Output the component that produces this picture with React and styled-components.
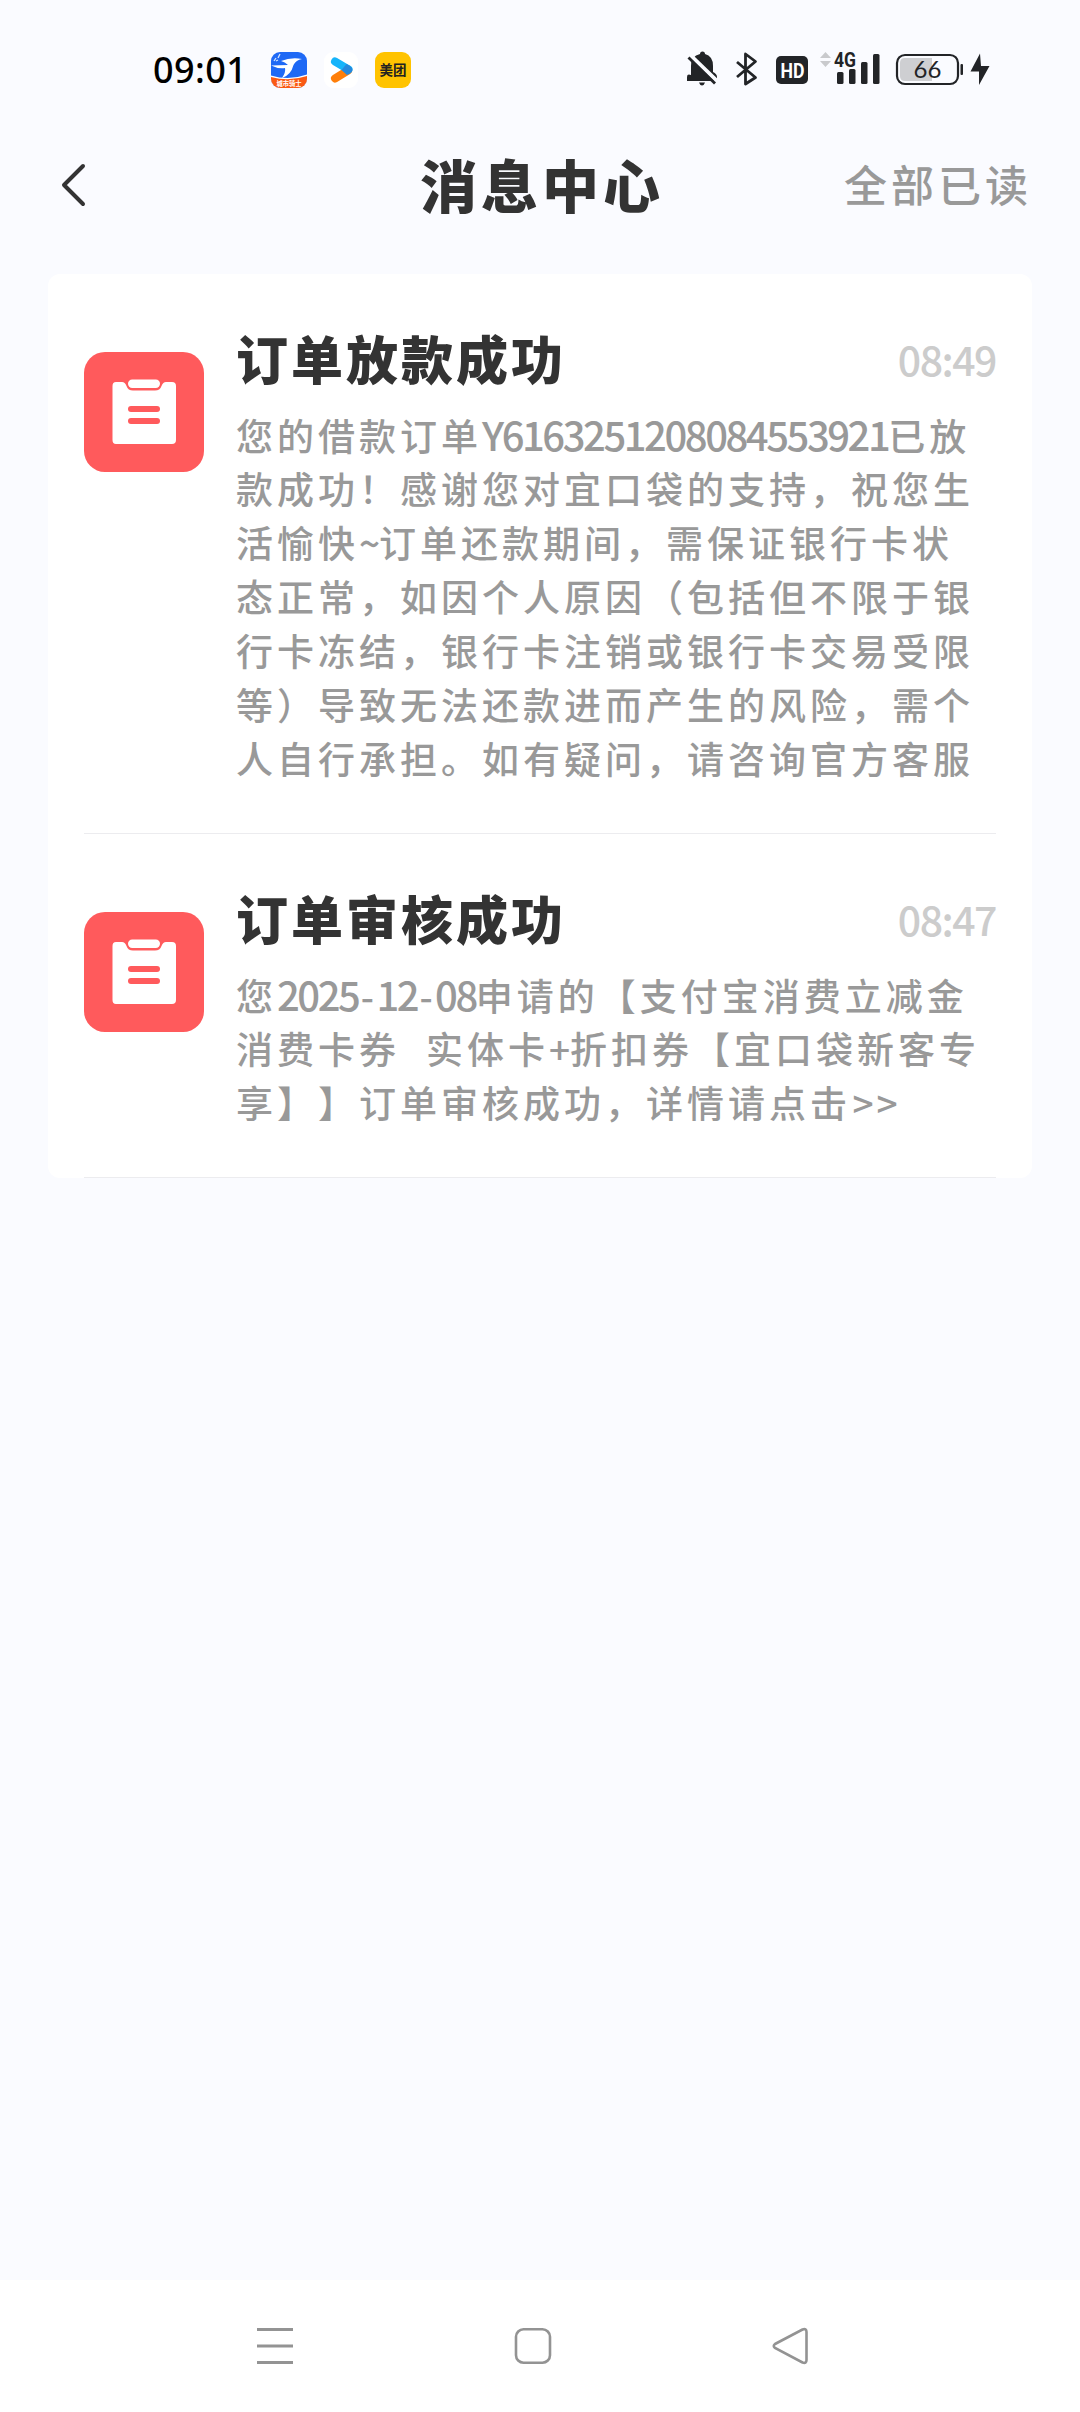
import styled, { createGlobalStyle } from "styled-components";

const GlobalStyle = createGlobalStyle`
  * {
    box-sizing: border-box;
  }

  body {
    margin: 0;
    background: #fafbff;
    font-family: "Noto Sans CJK SC", sans-serif;
    text-spacing-trim: space-all;
  }
`;

const Screen = styled.div`
  width: 1080px;
  height: 2412px;
  display: flex;
  flex-direction: column;
  background: #fafbff;
  overflow: hidden;
`;

const StatusBar = styled.div`
  height: 140px;
  padding: 0 90px 0 153px;
  display: flex;
  align-items: center;
  justify-content: space-between;
`;

const StatusGroup = styled.div`
  display: flex;
  align-items: center;

  svg {
    display: block;
  }
`;

const Clock = styled.span`
  width: 118px;
  font-family: "Noto Sans", sans-serif;
  font-size: 36px;
  font-weight: 500;
  line-height: 44px;
  letter-spacing: 0.4px;
  color: #000;
`;

const AppIcons = styled.div`
  display: flex;
  align-items: center;
  gap: 16px;
`;

const Header = styled.header`
  height: 134px;
  padding: 0 48px 49px 60px;
  display: grid;
  grid-template-columns: 200px 1fr 188px;
  align-items: center;
`;

const BackButton = styled.button`
  display: flex;
  padding: 5px 0 0;
  border: none;
  background: none;
`;

const PageTitle = styled.h1`
  margin: 0;
  padding-right: 20px;
  font-size: 57px;
  font-weight: 900;
  line-height: 80px;
  letter-spacing: 4px;
  text-align: center;
  color: #333;
`;

const ReadAll = styled.button`
  padding: 0;
  border: none;
  background: none;
  font-family: inherit;
  font-size: 43px;
  font-weight: 500;
  line-height: 60px;
  letter-spacing: 4px;
  white-space: nowrap;
  color: #999;
`;

const Card = styled.main`
  margin: 0 48px;
  padding: 0 36px;
  border-radius: 12px;
  background: #fff;
`;

const Message = styled.article`
  display: flex;
  align-items: flex-start;
  gap: 32px;
  padding: 46px 0 47px;
  border-bottom: 1px solid #ececef;
`;

const MessageIcon = styled.div`
  flex: none;
  width: 120px;
  height: 120px;
  margin-top: 32px;
  border-radius: 21px;
  background: #ff5a5c;
`;

const Content = styled.div`
  flex: 1;
  min-width: 0;
`;

const TitleRow = styled.div`
  height: 78px;
  padding-bottom: 3px;
  display: flex;
  align-items: center;
  justify-content: space-between;
`;

const MessageTitle = styled.h2`
  margin: 0;
  font-size: 52px;
  font-weight: 900;
  line-height: 72px;
  letter-spacing: 3px;
  color: #333;
`;

const Time = styled.time`
  font-size: 41px;
  font-weight: 500;
  line-height: 60px;
  letter-spacing: -1.5px;
  color: #ccc;
`;

const Body = styled.div`
  margin-top: 10px;
  color: #999;
`;

const Line = styled.p`
  height: 54px;
  margin: 0;
  font-size: 37px;
  font-weight: 500;
  line-height: 52px;
  letter-spacing: 4px;
  white-space: pre;
`;

const Digits = styled.span`
  font-size: 40px;
  letter-spacing: -2.45px;
`;

const Mark = styled.span`
  display: inline-block;
  width: ${(props) => props.$width}px;
  letter-spacing: 0;
  text-align: center;
`;

const NavBar = styled.nav`
  height: 132px;
  margin-top: auto;
  padding: 0 271px 0 256px;
  display: flex;
  align-items: center;
  justify-content: space-between;
  background: #fff;
`;

const markWidths = { "-": 18, "~": 20, "+": 21, ">": 24, " ": 13 };

const messages = [
  {
    id: 1,
    title: "订单放款成功",
    time: "08:49",
    lines: [
      "您的借款订单Y6163251208084553921已放",
      "款成功！感谢您对宜口袋的支持，祝您生",
      "活愉快~订单还款期间，需保证银行卡状",
      "态正常，如因个人原因（包括但不限于银",
      "行卡冻结，银行卡注销或银行卡交易受限",
      "等）导致无法还款进而产生的风险，需个",
      "人自行承担。如有疑问，请咨询官方客服",
    ],
  },
  {
    id: 2,
    title: "订单审核成功",
    time: "08:47",
    lines: [
      "您2025-12-08申请的【支付宝消费立减金",
      "消费卡券  实体卡+折扣券【宜口袋新客专",
      "享】】订单审核成功，详情请点击>>",
    ],
  },
];

function TextLine({ text }) {
  const parts = text.split(/([A-Z0-9]+|[-~+> ])/).filter(Boolean);

  return (
    <Line>
      {parts.map((part, i) => {
        if (markWidths[part]) {
          return (
            <Mark key={i} $width={markWidths[part]}>
              {part}
            </Mark>
          );
        }
        if (/^[A-Z0-9]/.test(part)) return <Digits key={i}>{part}</Digits>;
        return part;
      })}
    </Line>
  );
}

function RiderIcon() {
  return (
    <svg width="36" height="36" viewBox="0 0 36 36">
      <defs>
        <clipPath id="rider">
          <rect width="36" height="36" rx="9" />
        </clipPath>
      </defs>
      <g clipPath="url(#rider)">
        <rect width="36" height="36" fill="#1f69f5" />
        <path d="M0 13.5 L17 13 Q14 10 10 9 Q20 5 31 7 Q25 8 22.500 13 Q20 23 11 26 Q15 20 14 16 Q7 17 0 13.500Z" fill="#fff" />
        <path d="M0 23.500 Q18 29 36 22.500 V36 H0Z" fill="#fff" />
        <path d="M0 25 Q18 30 36 24 V36 H0Z" fill="#fa5a14" />
        <path d="M3 9 L5 6 M7 6 L9 2 M5 9 L7 8" stroke="#d5e4ff" strokeWidth="1.300" />
        <text x="18" y="33.500" fontSize="6.300" fontWeight="700" textAnchor="middle" fill="#fff">
          城市骑士
        </text>
      </g>
    </svg>
  );
}

function PlayIcon() {
  return (
    <svg width="36" height="36" viewBox="0 0 36 36">
      <rect x="1" width="34" height="36" rx="9" fill="#fff" />
      <path d="M12 26.500 L25 18.500" stroke="#ff7f0a" strokeWidth="8" strokeLinecap="round" />
      <path d="M12 9.500 L25.500 17.500" stroke="#16b4fa" strokeWidth="8" strokeLinecap="round" />
      <path d="M23.500 12 Q29 14.500 29.500 18 Q29 21 24 23 L18.500 18Z" fill="#2688dc" />
    </svg>
  );
}

function MeituanIcon() {
  return (
    <svg width="36" height="36" viewBox="0 0 36 36">
      <rect width="36" height="36" rx="9" fill="#ffc300" />
      <text x="18" y="23" fontSize="13.500" fontWeight="700" textAnchor="middle" fill="#222">
        美团
      </text>
    </svg>
  );
}

// bell-off, bluetooth, HD, signal, battery and charging bolt
function SystemIcons() {
  return (
    <svg width="310" height="60" viewBox="680 40 310 60" fill="#222427">
      <path d="M691 75 V66 Q691 56 700 54 Q700 51.500 702.500 51.500 Q705 51.500 705 54 Q713 56 713 66 V72 Q717 74 717 77 V81 H687 V77 Q687 73.500 691 75Z" />
      <path d="M699 82.500 H705 Q704 85.500 702 85.500 Q700 85.500 699 82.500Z" />
      <path d="M690 55 L719 83" stroke="#fafbff" strokeWidth="4" />
      <path d="M688.500 57.500 L715 83.500" stroke="#222427" strokeWidth="2.800" />

      <path
        d="M737 62 L755.500 77.500 L745.500 84 V54 L755.500 61.500 L737 77"
        fill="none"
        stroke="#222427"
        strokeWidth="2.800"
        strokeLinejoin="round"
      />

      <rect x="776" y="56" width="32" height="28" rx="5" />
      <text x="780.500" y="77.500" fontFamily="Roboto" fontSize="21" fontWeight="700" textLength="24" lengthAdjust="spacingAndGlyphs" fill="#fff">
        HD
      </text>

      <path d="M820 58 L825.500 52 L831 58Z M820 61 L825.500 67 L831 61Z" fill="#c9cacd" />
      <text x="834" y="67" fontFamily="Roboto" fontSize="20" fontWeight="700" textLength="22" lengthAdjust="spacingAndGlyphs">
        4G
      </text>
      <rect x="837" y="72" width="6.500" height="12" rx="1.500" />
      <rect x="849" y="69" width="6.500" height="15" rx="1.500" />
      <rect x="861" y="62" width="6.500" height="22" rx="1.500" />
      <rect x="873" y="54" width="6.500" height="30" rx="1.500" />

      <path d="M905 58 H932 V81 H905 Q900 81 900 76 V63 Q900 58 905 58Z" fill="#cecfd2" />
      <rect x="897" y="55" width="61" height="29" rx="8" fill="none" stroke="#222427" strokeWidth="2.200" />
      <rect x="960.500" y="64" width="2.500" height="11" rx="1" />
      <text x="927.500" y="78" fontFamily="Lato" fontSize="24" textAnchor="middle">
        66
      </text>
      <path d="M980 53.500 L970.500 71.500 H979 V85 L989.500 66 H981Z" />
    </svg>
  );
}

function Clipboard() {
  return (
    <svg width="120" height="120" viewBox="0 0 120 120">
      <path
        d="M32 30 H38 Q41 30 42.500 34 Q44 38.500 49 38.500 H71 Q76 38.500 77.500 34 Q79 30 82 30 H88 Q92 30 92 34 V88 Q92 92 88 92 H32 Q28.500 92 28.500 88 V34 Q28.500 30 32 30Z"
        fill="#fff"
      />
      <rect x="44" y="27.500" width="32" height="8.500" rx="4.200" fill="#fff" />
      <rect x="44" y="54" width="32" height="6" rx="3" fill="#ff5a5c" />
      <rect x="44" y="66" width="32" height="6" rx="3" fill="#ff5a5c" />
    </svg>
  );
}

export default function App() {
  return (
    <Screen>
      <GlobalStyle />

      <StatusBar>
        <StatusGroup>
          <Clock>09:01</Clock>
          <AppIcons>
            <RiderIcon />
            <PlayIcon />
            <MeituanIcon />
          </AppIcons>
        </StatusGroup>
        <StatusGroup>
          <SystemIcons />
        </StatusGroup>
      </StatusBar>

      <Header>
        <BackButton aria-label="返回">
          <svg width="28" height="46" viewBox="0 0 28 46">
            <path
              d="M23 4 L4 23 L23 42"
              fill="none"
              stroke="#333"
              strokeWidth="4"
              strokeLinecap="round"
              strokeLinejoin="round"
            />
          </svg>
        </BackButton>
        <PageTitle>消息中心</PageTitle>
        <ReadAll>全部已读</ReadAll>
      </Header>

      <Card>
        {messages.map((message) => (
          <Message key={message.id}>
            <MessageIcon>
              <Clipboard />
            </MessageIcon>
            <Content>
              <TitleRow>
                <MessageTitle>{message.title}</MessageTitle>
                <Time>{message.time}</Time>
              </TitleRow>
              <Body>
                {message.lines.map((line) => (
                  <TextLine key={line} text={line} />
                ))}
              </Body>
            </Content>
          </Message>
        ))}
      </Card>

      <NavBar>
        <svg width="38" height="40" viewBox="0 0 38 40" stroke="#939393" strokeWidth="3">
          <path d="M1 3.500 H37 M1 20 H37 M1 36.500 H37" />
        </svg>
        <svg width="38" height="40" viewBox="0 0 38 40" fill="none" stroke="#939393" strokeWidth="2.600">
          <rect x="2" y="3.300" width="34" height="33.400" rx="7.500" />
        </svg>
        <svg width="38" height="40" viewBox="0 0 38 40" fill="none" stroke="#939393" strokeWidth="2.600">
          <path d="M4 18 L31.500 3.500 Q35.500 2 35.500 6 V34 Q35.500 38 31.500 36.500 L4 22 Q1.500 20 4 18Z" />
        </svg>
      </NavBar>
    </Screen>
  );
}
